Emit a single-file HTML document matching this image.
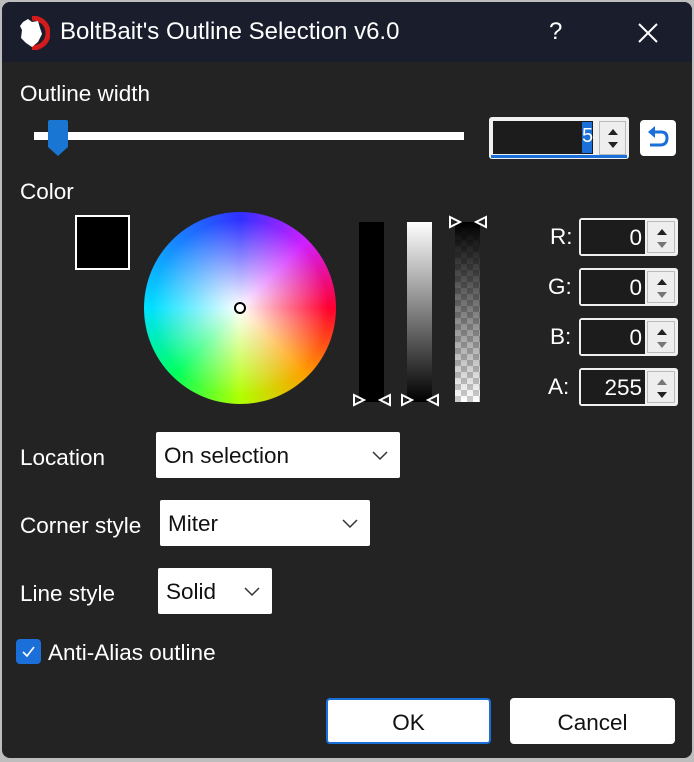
<!DOCTYPE html>
<html><head><meta charset="utf-8"><style>
*{box-sizing:border-box;margin:0;padding:0}
body{width:694px;height:762px;background:#bdbdbd;font-family:"Liberation Sans",sans-serif;color:#fff;position:relative;overflow:hidden}
.win{position:absolute;left:2px;top:2px;width:690px;height:756px;background:#232323;border-radius:8px;overflow:hidden}
.title{position:absolute;left:0;top:0;width:690px;height:60px;background:#1a1d2b}
.a{position:absolute}
.t{font-size:22.5px;white-space:nowrap}
.dd{position:absolute;background:#fff;color:#111;font-size:22.5px;padding:11px 8px;border-radius:2px}
.dd svg{position:absolute;right:12px;top:19px}
.num{position:absolute;width:99px;height:38px;background:#f0f0f0;border-radius:3px}
.num .in{position:absolute;left:2px;top:2px;width:64px;height:34px;background:#1c1c1c;text-align:right;font-size:22.5px;padding:5px 3px 0 0}
.num .sp{position:absolute;left:68px;top:3px;width:28px;height:32px;border:1px solid #bbb;background:#eee}
.up,.dn{position:absolute;left:9px;width:0;height:0;border-left:5px solid transparent;border-right:5px solid transparent}
.up{top:7px;border-bottom:6px solid #222}.dn{top:20px;border-top:6px solid #777}
.btn{position:absolute;background:#fff;color:#111;font-size:22.5px;text-align:center;border-radius:4px;padding-top:10px}
</style></head><body>
<div class="win">
<div class="title">
 <svg class="a" style="left:16px;top:14px" width="32" height="34" viewBox="0 0 32 34"><path d="M14 2 C24 2 30 9 30 17 C30 26 23 32 14 32" fill="none" stroke="#d41b1b" stroke-width="5"/><path d="M5 6 L10 3 L14 6 L20 5 L22 12 L24 18 L20 26 L14 31 L8 27 L3 22 L4 14 L2 10Z" fill="#fff"/></svg>
 <div class="a t" style="left:58px;top:16px;font-size:24px">BoltBait's Outline Selection v6.0</div>
 <div class="a t" style="left:547px;top:16px;font-size:24px">?</div>
 <svg class="a" style="left:635px;top:20px" width="22" height="22"><path d="M2 2L20 20M20 2L2 20" stroke="#fff" stroke-width="2"/></svg>
</div>
<div class="a t" style="left:18px;top:79px">Outline width</div>
<div class="a" style="left:32px;top:130px;width:430px;height:8px;background:#fff"></div>
<svg class="a" style="left:44px;top:117px" width="24" height="38"><path d="M2 3Q2 1 4 1H20Q22 1 22 3V28L12 37L2 28Z" fill="#1976d2"/></svg>
<div class="a" style="left:487px;top:115px;width:140px;height:42px;background:#f0f0f0;border-radius:3px"></div>
<div class="a" style="left:491px;top:119px;width:100px;height:33px;background:#1c1c1c"></div>
<div class="a" style="left:580px;top:120px;width:10px;height:31px;background:#1a6fd8;color:#fff;font-size:20px;padding-top:3px">5</div>
<div class="a" style="left:489px;top:153px;width:136px;height:3px;background:#1a6fd8"></div>
<div class="a" style="left:597px;top:119px;width:27px;height:34px;border:1px solid #bbb;background:#eee"><div class="up" style="left:8px"></div><div class="dn" style="left:8px;border-top-color:#222"></div></div>
<div class="a" style="left:638px;top:118px;width:36px;height:36px;background:#fff;border-radius:4px"><svg width="36" height="36"><path d="M11 12H21Q27 12 27 18Q27 25 20 25H10" fill="none" stroke="#1a6fd8" stroke-width="3"/><path d="M8 12L15 6V18Z" fill="#1a6fd8"/></svg></div>
<div class="a t" style="left:18px;top:177px">Color</div>
<div class="a" style="left:73px;top:213px;width:55px;height:55px;border:2px solid #fff;background:#000"></div>
<div class="a" style="left:142px;top:210px;width:192px;height:192px;border-radius:50%;background:conic-gradient(from 0deg,#3030ff,#d020ff 45deg,#ff0030 90deg,#ffa000 135deg,#b0ff00 180deg,#00ff60 225deg,#00e0ff 270deg,#3030ff 360deg)"></div>
<div class="a" style="left:142px;top:210px;width:192px;height:192px;border-radius:50%;background:radial-gradient(circle,#fff 0%,rgba(255,255,255,.45) 35%,rgba(255,255,255,0) 65%)"></div>
<div class="a" style="left:232px;top:300px;width:12px;height:12px;border-radius:50%;border:2px solid #000;background:#fff"></div>
<div class="a" style="left:357px;top:220px;width:25px;height:180px;background:#000"></div>
<div class="a" style="left:405px;top:220px;width:25px;height:180px;background:linear-gradient(#fff,#000)"></div>
<div class="a" style="left:453px;top:220px;width:25px;height:180px;background:repeating-conic-gradient(#ccc 0 25%,#fff 0 50%) 0 0/12px 12px"></div>
<div class="a" style="left:453px;top:220px;width:25px;height:180px;background:linear-gradient(#000,rgba(0,0,0,0))"></div>
<svg class="a" style="left:345px;top:210px" width="145" height="200" fill="none" stroke="#fff" stroke-width="2">
<path d="M7 183L17 188L7 193Z M43 183L33 188L43 193Z M55 183L65 188L55 193Z M91 183L81 188L91 193Z M103 5L113 10L103 15Z M139 5L129 10L139 15Z"/></svg>
<div class="a t" style="left:548px;top:222px">R:</div>
<div class="num" style="left:577px;top:216px"><div class="in">0</div><div class="sp"><div class="up"></div><div class="dn"></div></div></div>
<div class="a t" style="left:546px;top:272px">G:</div>
<div class="num" style="left:577px;top:266px"><div class="in">0</div><div class="sp"><div class="up"></div><div class="dn"></div></div></div>
<div class="a t" style="left:548px;top:322px">B:</div>
<div class="num" style="left:577px;top:316px"><div class="in">0</div><div class="sp"><div class="up"></div><div class="dn"></div></div></div>
<div class="a t" style="left:546px;top:372px">A:</div>
<div class="num" style="left:577px;top:366px"><div class="in">255</div><div class="sp"><div class="up" style="border-bottom-color:#777"></div><div class="dn" style="border-top-color:#222"></div></div></div>
<div class="a t" style="left:18px;top:443px">Location</div>
<div class="dd" style="left:154px;top:430px;width:244px;height:46px">On selection<svg width="16" height="10"><path d="M1 1L8 8L15 1" fill="none" stroke="#333" stroke-width="1.5"/></svg></div>
<div class="a t" style="left:18px;top:511px">Corner style</div>
<div class="dd" style="left:158px;top:498px;width:210px;height:46px">Miter<svg width="16" height="10"><path d="M1 1L8 8L15 1" fill="none" stroke="#333" stroke-width="1.5"/></svg></div>
<div class="a t" style="left:18px;top:579px">Line style</div>
<div class="dd" style="left:156px;top:566px;width:114px;height:46px">Solid<svg width="16" height="10"><path d="M1 1L8 8L15 1" fill="none" stroke="#333" stroke-width="1.5"/></svg></div>
<div class="a" style="left:14px;top:637px;width:25px;height:25px;background:#1a6fd8;border-radius:4px"><svg width="25" height="25"><path d="M7 13L11 17L18 8" fill="none" stroke="#fff" stroke-width="1.6"/></svg></div>
<div class="a t" style="left:46px;top:638px">Anti-Alias outline</div>
<div class="btn" style="left:324px;top:696px;width:165px;height:46px;border:2px solid #1a6fd8">OK</div>
<div class="btn" style="left:508px;top:696px;width:165px;height:46px;padding-top:12px">Cancel</div>
</div>
</body></html>
